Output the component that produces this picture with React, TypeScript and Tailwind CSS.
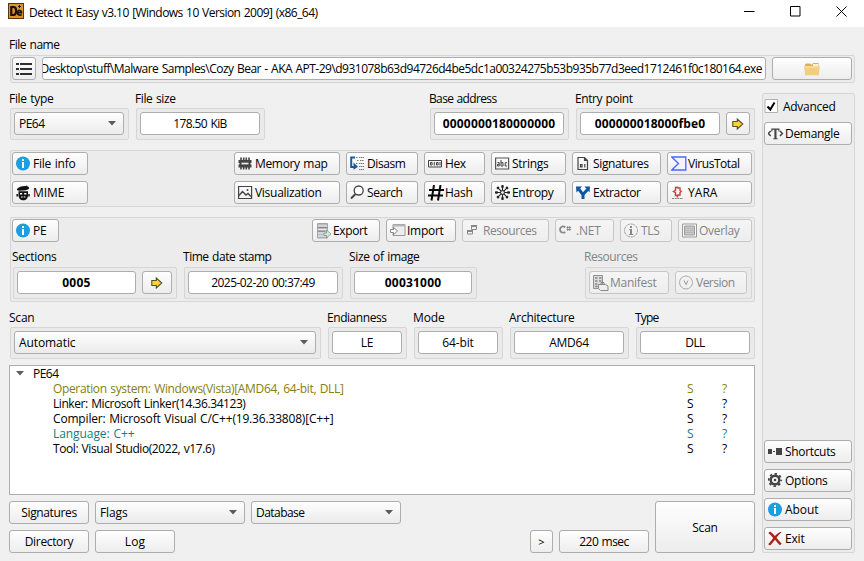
import { useLayoutEffect, useRef, useState } from "react";
import type { ReactNode } from "react";

/* Text whose letter spacing is adjusted so that the run fills `w` pixels. */
function T({ w, children, className = "" }: { w: number; children: string; className?: string }) {
  const ref = useRef<HTMLSpanElement>(null);
  const [spacing, setSpacing] = useState(0);
  useLayoutEffect(() => {
    if (ref.current) {
      setSpacing((w + 0.5 - ref.current.getBoundingClientRect().width) / children.length);
    }
  }, [w, children]);
  return (
    <span ref={ref} style={{ letterSpacing: spacing }} className={"inline-block shrink-0 whitespace-pre leading-[15px] [word-spacing:0.8px] " + className}>
      {children}
    </span>
  );
}

const edge = "rounded-[3px] border border-[#adadad]";

function Button({ className, icon, disabled, children }: { className: string; icon?: ReactNode; disabled?: boolean; children?: ReactNode }) {
  return (
    <button
      className={
        "flex shrink-0 items-center rounded-[3px] border bg-linear-to-b " +
        (disabled ? "border-[#c6c6c6] from-[#f5f5f5] to-[#eeeeee] text-[#848484] " : "border-[#adadad] from-[#fefefe] to-[#ededed] ") +
        (icon ? "gap-px pl-[3px] " : "justify-center ") +
        className
      }
    >
      {icon}
      {children}
    </button>
  );
}

function Input({ className, children }: { className: string; children: ReactNode }) {
  return <div className={"flex h-[23px] shrink-0 items-center justify-center overflow-hidden bg-white " + edge + " " + className}>{children}</div>;
}

function Combo({ className, children }: { className: string; children: ReactNode }) {
  return (
    <div className={"flex h-[23px] shrink-0 items-center justify-between bg-linear-to-b from-[#fefefe] to-[#ebebeb] pl-1 pr-[7px] " + edge + " " + className}>
      {children}
      <Arrow />
    </div>
  );
}

function Arrow() {
  return (
    <svg width="8" height="5" viewBox="0 0 8 5" className="shrink-0">
      <path d="M0 0h8L4 4.5z" fill="#5c5c5c" />
    </svg>
  );
}

function Field({ label, className = "", gap = "mt-px", children }: { label: ReactNode; className?: string; gap?: string; children: ReactNode }) {
  return (
    <div className={"flex flex-col items-start " + className}>
      <div className="-ml-px h-4">{label}</div>
      <div className={"flex h-8 gap-1.5 rounded-[2px] border border-[#d6d6d6] bg-[#eaeaea] pb-1 pl-[3px] pr-1 pt-[3px] " + gap}>{children}</div>
    </div>
  );
}

function Svg({ children, size = 16 }: { children: ReactNode; size?: number }) {
  return (
    <svg width={size} height={size} viewBox="0 0 16 16" className="shrink-0" fill="none">
      {children}
    </svg>
  );
}

const InfoIcon = () => (
  <Svg>
    <circle cx="7" cy="7.500" r="7" fill="#1a9fe0" />
    <path d="M6 3h2v2H6zM6 6h2v6H6z" fill="#fff" />
  </Svg>
);
const MimeIcon = () => (
  <Svg>
    <path d="M1 4C2.500 2 7 .8 10 1.200l.8-.9.5 1c1.500.3 2.200 1.700 1.500 2.700L10 5.200 3.500 5.700C1.500 5.700.5 5 1 4z" fill="#111" />
    <path d="M2.500 6.300h9.500v4c0 3-2 5-4.700 5s-4.800-2-4.800-5z" fill="#111" />
    <path d="M1.200 9v2.500M13 9v2.500" stroke="#111" strokeWidth="1.500" />
    <path d="M4 8h2.200v1.600H4zm4.200 0h2.200v1.600H8.200zM5 11.500h1.700v1H5zm2.700 0h1.700v1H7.700z" fill="#fff" />
  </Svg>
);
const MemoryIcon = () => (
  <Svg>
    <path d="M3 1.500v12M5.700 1.500v12M8.300 1.500v12M11 1.500v12" stroke="#444" strokeWidth="1.600" />
    <path d="M.5 4h13v3h-1v1.500h1V11.500H.5V8.500h1V7h-1z" fill="#444" />
    <path d="M3.500 6.700h7v1.700h-7z" fill="#eee" />
  </Svg>
);
const DisasmIcon = () => (
  <Svg>
    <path d="M5 1.500H1.200v9.500h5" stroke="#155a9c" strokeWidth="2" />
    <path d="M3.500 6.500v2.800l1 1.500-1 1v2l4.500-3z" fill="#155a9c" />
    <path d="M6 1.500h2m1 0h5M7 4.500h2m1 0h4M6 7.500h2m1 0h5M9 10.500h5M9 13.500h5" stroke="#777" strokeDasharray="1.500 .5" />
  </Svg>
);
const HexIcon = () => (
  <Svg>
    <path d="M.5 4.500h13v6.500H.5z" stroke="#444" />
    <path d="M2.500 6.500h1.600v2.500H2.500zM8.500 6.500h1.600v2.500H8.500zM6.300 6v3.500M12 6v3.500" stroke="#444" />
  </Svg>
);
const StringsIcon = () => (
  <Svg>
    <path d="M.6 2h13v11H.6z" stroke="#555" strokeWidth="1.200" />
    <path d="M2.500 6.500h1.700V10H2.500V8.300h1.700M6 4v6h2V6.700H6M12 6.700h-1.800V10H12" stroke="#444" />
  </Svg>
);
const SignatureIcon = () => (
  <Svg>
    <path d="M2 1.500h6.500L11.500 4.500v9H2zM8.500 1.500v3h3" stroke="#444" strokeWidth="1.200" />
    <path d="M4.500 8.500h1.500v2.500H4.500zM8.800 8v3.500" stroke="#444" strokeWidth="1.200" />
  </Svg>
);
const VirusIcon = () => (
  <Svg>
    <path d="M.8 1h14v13H.8l6.700-6.500z" fill="#f3f4ff" stroke="#4569f5" strokeWidth="1.300" />
  </Svg>
);
const VisualIcon = () => (
  <Svg>
    <path d="M.6 1.500h13v12H.6z" stroke="#444" strokeWidth="1.200" />
    <path d="M1 10.500l3.500-4L8 10l2-1.500 3 3" stroke="#444" strokeWidth="1.400" />
    <circle cx="9.500" cy="5" r="1" fill="#444" />
  </Svg>
);
const SearchIcon = () => (
  <Svg>
    <circle cx="8.700" cy="5.500" r="4.500" fill="#fff" stroke="#444" strokeWidth="1.300" />
    <path d="M5.500 9L1 13.500" stroke="#444" strokeWidth="2" />
  </Svg>
);
const HashIcon = () => (
  <Svg>
    <path d="M6 0L3.500 15.500M12.500 0L10 15.500M1 5h15M0 10.500h15" stroke="#0a0a0a" strokeWidth="2" />
  </Svg>
);
const EntropyIcon = () => (
  <Svg>
    <path d="M7.500 0v15M0 7.500h15M2.200 2.200l10.600 10.600M12.800 2.200L2.200 12.800" stroke="#222" strokeWidth="1.100" />
    <path d="M7.500.2v2.500M7.500 12.300v2.500M.2 7.500h2.500M12.300 7.500h2.500M2.200 2.200l1.500 1.500M11.300 11.300l1.500 1.500M12.800 2.200l-1.500 1.500M3.700 11.300l-1.500 1.500" stroke="#222" strokeWidth="2.400" />
    <circle cx="7.500" cy="7.500" r="2" fill="#ddd" stroke="#222" />
  </Svg>
);
const ExtractorIcon = () => (
  <Svg>
    <path d="M7 14V9.500L3 4.500M7 9.500l4.500-5" stroke="#0c569c" strokeWidth="3" />
    <path d="M0 1.500h6L.5 7.500zM14 1.500H8.500l5 6z" fill="#0c569c" />
  </Svg>
);
const YaraIcon = () => (
  <Svg>
    <path d="M6 2.500H4.500v2.800L2.500 6.500l2 1.200v2.800H6M6.500 1.500v2M6.500 9.500v3M7 3h2v2.500l1.200 1L9 7.500v2.500H7" stroke="#d03a3a" strokeWidth="1.400" />
    <path d="M1 13.500h11" stroke="#888" strokeDasharray="2 .6" />
  </Svg>
);
const ExportIcon = () => (
  <Svg>
    <path d="M1.500.5h10v14.500h-10z" fill="#b9bcc2" stroke="#a5a5a5" />
    <path d="M2 3h9M2 6.500h9M2 10h8M2 13h8" stroke="#ececec" />
    <path d="M2 4.500h9M2 8.300h7" stroke="#858585" />
    <path d="M8 10h2.500V7l4.500 4-4.500 4v-2.500H8z" fill="#d8e8d4" stroke="#819680" strokeWidth=".8" />
  </Svg>
);
const ImportIcon = () => (
  <Svg>
    <path d="M3 1.500h12v11H3z" fill="#eee" stroke="#999" />
    <path d="M3 2.500h12" stroke="#b6b6b6" strokeWidth="2" />
    <path d="M.5 6.500h3V4.300L7.500 8l-4 3.700V9.500h-3z" fill="#fafafa" stroke="#888" />
  </Svg>
);
const ResourceIcon = () => (
  <Svg>
    <path d="M5.500 2.500h5v4h-5zM1.500 7.500h5v3.500h-5z" fill="#f2f2f2" stroke="#888" />
    <path d="M5 3h6M1 8h6" stroke="#888" strokeWidth="2" />
  </Svg>
);
const NetIcon = () => (
  <Svg>
    <path d="M6.300 4.200C3.500 2.300 1 4 1 6.500s2.500 4.200 5.300 2.400" stroke="#888" strokeWidth="1.800" />
    <path d="M8.700 3v5M10.700 3v5M7.500 4.500h4.700M7.500 6.500h4.700" stroke="#888" strokeWidth=".9" />
  </Svg>
);
const TlsIcon = () => (
  <Svg>
    <circle cx="7" cy="7.500" r="6.500" stroke="#999" strokeDasharray="2 .7" />
    <path d="M6 3h2v2H6zM6 6h2v5h1.200v1h-4v-1H6V7h-.8V6z" fill="#888" />
  </Svg>
);
const OverlayIcon = () => (
  <Svg>
    <path d="M.5 1h14v13H.5z" fill="#fafafa" stroke="#999" />
    <path d="M2.500 3h10v9h-10z" fill="#c8c8c8" stroke="#9c9c9c" />
    <path d="M3 5.500h9M3 7.500h9M3 9.500h9" stroke="#b8b8b8" />
  </Svg>
);
const ManifestIcon = () => (
  <Svg>
    <path d="M.5.5h9v13h-9z" fill="#ddd" stroke="#8e8e8e" />
    <path d="M2 3h2.500M2 6h2.500M2 9h2.500M2 11.500h2.500M6 3h2.500M6 6h2.500" stroke="#888" strokeWidth="1.500" />
    <path d="M5.500 9.500h7l2.500 1.500v4.500h-7.500l-2-2z" fill="#eee" stroke="#888" />
    <path d="M8 9V7.500h3V9" stroke="#888" />
  </Svg>
);
const VersionIcon = () => (
  <Svg>
    <circle cx="7" cy="7.500" r="6.500" stroke="#aaa" />
    <path d="M5 5.500l2 4 2-4" stroke="#999" />
  </Svg>
);
const DemangleIcon = () => (
  <Svg>
    <path d="M2.700 5L.3 7.500l2.400 2.500M12 5l2.400 2.500L12 10" stroke="#444" strokeWidth="1.500" />
    <path d="M3.300 2.500h8.200v3h-.9l-.4-1.700H8.500v8.400l1.200.3v.8H5.200v-.8l1.200-.3V3.800H4.600l-.4 1.700h-.9z" fill="#444" />
  </Svg>
);
const ShortcutIcon = () => (
  <Svg>
    <path d="M0 5h4v5H0zM5 7h2v1H5zM8 4h6v7H8z" fill="#444" />
  </Svg>
);
const GearIcon = () => (
  <Svg>
    <circle cx="7" cy="7" r="4.300" stroke="#444" strokeWidth="2.400" />
    <circle cx="7" cy="7" r="6.200" stroke="#444" strokeWidth="1.800" strokeDasharray="2.435 2.435" strokeDashoffset="1.200" />
    <circle cx="7" cy="7" r="1.300" fill="#444" />
  </Svg>
);
const ExitIcon = () => (
  <Svg>
    <path d="M.3 2l1.900-1.500c1.500 1 3.300 2.800 4.700 4.500C8.500 3.200 10.500 1.500 13 .8l.5.700c-2 1.400-3.500 3.200-5 5.200 1.900 2.200 3.500 4.300 5.200 6l-1.900 1.500c-1.800-1.700-3.300-3.600-4.800-5.400C5.300 10.700 3.800 12.700 2.200 14.500L.2 13.300C2 11.300 3.600 9.200 5.200 7 3.600 5 2 3.300.3 2z" fill="#a82417" />
  </Svg>
);
const GoIcon = () => (
  <svg width="12" height="12" viewBox="0 0 12 12">
    <path d="M.8 3.500h4.500V1l5.500 5-5.500 5V8.500H.8z" fill="#ffd42e" stroke="#54502c" strokeWidth="1.100" />
  </svg>
);

function FolderIcon() {
  return (
    <svg width="16" height="14" viewBox="0 0 16 14">
      <path d="M1 13V2.500l1-1h4l1 1h1l1-1.500h5.500V13z" fill="#d9b060" />
      <path d="M9 2h5v2H9z" fill="#fff5cf" />
      <path d="M0 4h15.800L14.700 13.300H1.300z" fill="#f0cf80" />
      <path d="M1 5h13.500" stroke="#f9e5ab" />
    </svg>
  );
}

function TitleBar() {
  return (
    <header className="flex h-[27px] items-start bg-white pl-2">
      <svg width="16" height="16" viewBox="0 0 16 16" className="mt-[3px]">
        <defs>
          <linearGradient id="logo" x2="0" y2="1">
            <stop stopColor="#d19a35" />
            <stop offset="1" stopColor="#f08c17" />
          </linearGradient>
        </defs>
        <path d="M0 0h16v16H0z" fill="#543610" />
        <path d="M1 1h14v14H1z" fill="url(#logo)" />
        <path d="M3.300 4h2.200c3.500 0 3.500 8 0 8H3.300z" fill="none" stroke="#17120a" strokeWidth="2.200" />
        <path d="M9.500 9.700h4c0-3-4-3-4-.2 0 3.200 3 3 4.200 2" fill="none" stroke="#17120a" strokeWidth="1.600" />
        <path d="M10 3.500h3M11.500 2v3" stroke="#2b1d0a" />
      </svg>
      <T w={288} className="ml-[5px] mt-[5px]">Detect It Easy v3.10 [Windows 10 Version 2009] (x86_64)</T>
      <div className="ml-auto mr-[17px] mt-[6px] flex items-center gap-[35px]">
        <svg width="11" height="11" viewBox="0 0 11 11"><path d="M0 5.500h10.500" stroke="#000" /></svg>
        <svg width="11" height="11" viewBox="0 0 11 11"><path d="M.5.5h9.500v9.500H.5z" stroke="#000" fill="none" /></svg>
        <svg width="11" height="11" viewBox="0 0 11 11"><path d="M.5.5l10 10M10.500.5l-10 10" stroke="#000" /></svg>
      </div>
    </header>
  );
}

const group = "rounded-[2px] border border-[#d6d6d6] bg-[#ececec]";

const rows = [
  { w: 290, color: "text-[#86800f]", text: "Operation system: Windows(Vista)[AMD64, 64-bit, DLL]" },
  { w: 192, color: "", text: "Linker: Microsoft Linker(14.36.34123)" },
  { w: 280, color: "", text: "Compiler: Microsoft Visual C/C++(19.36.33808)[C++]" },
  { w: 81, color: "text-[#0c8080]", text: "Language: C++" },
  { w: 161, color: "", text: "Tool: Visual Studio(2022, v17.6)" },
];

export default function App() {
  return (
    <div className="h-[561px] w-[864px] overflow-hidden bg-[#f0f0f0] font-['Open_Sans','Noto_Sans',sans-serif] text-[12px] leading-[15px] text-black">
      <TitleBar />
      <div className="pl-[9px] pt-[10px]">
        <div className="h-4"><T w={50}>File name</T></div>
        <div className="ml-px mt-0.5 flex h-7 w-[845px] gap-1.5 rounded-[2px] border border-[#d6d6d6] bg-[#ececec] pl-px pt-px">
          <Button className="h-[23px] w-6">
            <svg width="18" height="14" viewBox="0 0 18 14">
              <path d="M1 1h3v2H1zm4 0h12v2H5zM1 6h3v2H1zm4 0h12v2H5zm-4 5h3v2H1zm4 0h12v2H5z" fill="#2f2f2f" />
            </svg>
          </Button>
          <div className="flex h-[23px] w-[724px] shrink-0 items-center justify-end overflow-hidden rounded-[3px] border border-[#adadad] bg-white pr-[3px]">
            <T w={721}>{"Desktop\\stuff\\Malware Samples\\Cozy Bear - AKA APT-29\\d931078b63d94726d4be5dc1a00324275b53b935b77d3eed1712461f0c180164.exe"}</T>
          </div>
          <Button className="h-[23px] w-20"><FolderIcon /></Button>
        </div>

        <div className="mt-2 flex gap-[7px]">
          <main className="w-[746px]">
            <section className="flex pl-px">
              <Field label={<T w={44}>File type</T>}>
                <Combo className="w-[110px]"><T w={25}>PE64</T></Combo>
              </Field>
              <Field label={<T w={40}>File size</T>} className="ml-[7px]">
                <Input className="w-[120px]"><T w={53}>178.50 KiB</T></Input>
              </Field>
              <Field label={<T w={67}>Base address</T>} className="ml-auto">
                <Input className="w-[130px]"><T w={112} className="font-bold">0000000180000000</T></Input>
              </Field>
              <Field label={<T w={57}>Entry point</T>} className="ml-[7px]">
                <Input className="w-[140px]"><T w={110} className="font-bold">000000018000fbe0</T></Input>
                <Button className="h-[23px] w-6"><GoIcon /></Button>
              </Field>
            </section>

            <section className={"ml-px mt-2.5 flex h-[57px] justify-between pl-px pr-0.5 pt-px " + group}>
              <div className="flex flex-col gap-1.5">
                <Button className="h-[23px] w-[76px]" icon={<InfoIcon />}><T w={42}>File info</T></Button>
                <Button className="h-[23px] w-[76px]" icon={<MimeIcon />}><T w={31}>MIME</T></Button>
              </div>
              <div className="grid h-[52px] grid-cols-[106px_72px_61px_75px_89px_85px] grid-rows-[23px_23px] gap-1.5">
                <Button className="" icon={<MemoryIcon />}><T w={72}>Memory map</T></Button>
                <Button className="" icon={<DisasmIcon />}><T w={38}>Disasm</T></Button>
                <Button className="" icon={<HexIcon />}><T w={20}>Hex</T></Button>
                <Button className="" icon={<StringsIcon />}><T w={36}>Strings</T></Button>
                <Button className="" icon={<SignatureIcon />}><T w={55}>Signatures</T></Button>
                <Button className="" icon={<VirusIcon />}><T w={51}>VirusTotal</T></Button>
                <Button className="" icon={<VisualIcon />}><T w={66}>Visualization</T></Button>
                <Button className="" icon={<SearchIcon />}><T w={35}>Search</T></Button>
                <Button className="" icon={<HashIcon />}><T w={27}>Hash</T></Button>
                <Button className="" icon={<EntropyIcon />}><T w={41}>Entropy</T></Button>
                <Button className="" icon={<ExtractorIcon />}><T w={47}>Extractor</T></Button>
                <Button className="" icon={<YaraIcon />}><T w={29}>YARA</T></Button>
              </div>
            </section>

            <section className={"ml-px mt-2.5 h-[85px] pl-px pr-0.5 pt-px " + group}>
              <div className="flex h-[23px] justify-between">
                <Button className="w-[47px]" icon={<InfoIcon />}><T w={13}>PE</T></Button>
                <div className="flex gap-1.5">
                  <Button className="w-[68px]" icon={<ExportIcon />}><T w={34}>Export</T></Button>
                  <Button className="w-[70px]" icon={<ImportIcon />}><T w={36}>Import</T></Button>
                  <Button className="w-[87px]" disabled icon={<ResourceIcon />}><T w={53}>Resources</T></Button>
                  <Button className="w-[59px]" disabled icon={<NetIcon />}><T w={24}>.NET</T></Button>
                  <Button className="w-[52px]" disabled icon={<TlsIcon />}><T w={18}>TLS</T></Button>
                  <Button className="w-[74px]" disabled icon={<OverlayIcon />}><T w={40}>Overlay</T></Button>
                </div>
              </div>
              <div className="mt-[7px] flex pl-px">
                <Field gap="mt-0.5" label={<T w={44}>Sections</T>}>
                  <Input className="w-[119px]"><T w={28} className="font-bold">0005</T></Input>
                  <Button className="h-[23px] w-[30px]"><GoIcon /></Button>
                </Field>
                <Field gap="mt-0.5" className="ml-[7px]" label={<T w={88}>Time date stamp</T>}>
                  <Input className="w-[150px]"><T w={103}>2025-02-20 00:37:49</T></Input>
                </Field>
                <Field gap="mt-0.5" className="ml-[7px]" label={<T w={70}>Size of image</T>}>
                  <Input className="w-[118px]"><T w={56} className="font-bold">00031000</T></Input>
                </Field>
                <Field gap="mt-0.5" className="ml-auto" label={<T w={53} className="text-[#848484]">Resources</T>}>
                  <Button className="h-[23px] w-20" disabled icon={<ManifestIcon />}><T w={46}>Manifest</T></Button>
                  <Button className="h-[23px] w-[72px]" disabled icon={<VersionIcon />}><T w={38}>Version</T></Button>
                </Field>
              </div>
            </section>

            <section className="mt-2 flex justify-between pl-px">
              <Field label={<T w={25}>Scan</T>}>
                <Combo className="w-[302px]"><T w={56}>Automatic</T></Combo>
              </Field>
              <Field label={<T w={59}>Endianness</T>}>
                <Input className="w-[70px]"><T w={12}>LE</T></Input>
              </Field>
              <Field label={<T w={31}>Mode</T>}>
                <Input className="w-[80px]"><T w={31}>64-bit</T></Input>
              </Field>
              <Field label={<T w={65}>Architecture</T>}>
                <Input className="w-[110px]"><T w={39}>AMD64</T></Input>
              </Field>
              <Field label={<T w={23}>Type</T>}>
                <Input className="w-[110px]"><T w={19}>DLL</T></Input>
              </Field>
            </section>

            <section className="mt-1.5 h-[130px] border border-[#adadad] bg-white">
              <div className="flex h-[15px] items-center pl-1.5">
                <Arrow />
                <T w={25} className="ml-[9px]">PE64</T>
              </div>
              {rows.map((row) => (
                <div key={row.text} className={"flex h-[15px] items-center pl-[43px] " + row.color}>
                  <T w={row.w}>{row.text}</T>
                  <span className="ml-auto w-[35px]">S</span>
                  <span className="w-8">?</span>
                </div>
              ))}
            </section>

            <footer className="mt-1.5 flex justify-between">
              <div className="flex flex-col gap-1.5">
                <div className="flex gap-1.5">
                  <Button className="h-[23px] w-20"><T w={55}>Signatures</T></Button>
                  <Combo className="w-[150px]"><T w={27}>Flags</T></Combo>
                  <Combo className="w-[150px]"><T w={48}>Database</T></Combo>
                </div>
                <div className="flex gap-1.5">
                  <Button className="h-[23px] w-20"><T w={48}>Directory</T></Button>
                  <Button className="h-[23px] w-20"><T w={20}>Log</T></Button>
                </div>
              </div>
              <div className="flex items-end gap-1.5">
                <Button className="h-[23px] w-[23px]"><span className="text-[11px]">&gt;</span></Button>
                <Button className="h-[23px] w-[90px]"><T w={49}>220 msec</T></Button>
                <Button className="h-[52px] w-[100px]"><T w={25}>Scan</T></Button>
              </div>
            </footer>
          </main>

          <aside className={"mt-0.5 flex h-[460px] w-[93px] flex-col pb-0.5 pl-px pt-[3px] " + group}>
            <div className="flex h-[18px] items-center">
              <svg width="14" height="14" viewBox="0 0 14 14" className="shrink-0">
                <path d="M1 .5h12.500v13H1z" fill="#fff" stroke="#b2b2b2" />
                <path d="M3.500 7.500l2.800 3L10.500 3.500" fill="none" stroke="#000" strokeWidth="2" />
              </svg>
              <T w={52} className="ml-[5px]">Advanced</T>
            </div>
            <div className="mt-[7px] flex grow flex-col">
              <Button className="h-[23px] w-[88px]" icon={<DemangleIcon />}><T w={54}>Demangle</T></Button>
              <div className="mt-auto flex flex-col gap-1.5">
                <Button className="h-[23px] w-[88px]" icon={<ShortcutIcon />}><T w={50}>Shortcuts</T></Button>
                <Button className="h-[23px] w-[88px]" icon={<GearIcon />}><T w={42}>Options</T></Button>
                <Button className="h-[23px] w-[88px]" icon={<InfoIcon />}><T w={33}>About</T></Button>
                <Button className="h-[23px] w-[88px]" icon={<ExitIcon />}><T w={19}>Exit</T></Button>
              </div>
            </div>
          </aside>
        </div>
      </div>
    </div>
  );
}
